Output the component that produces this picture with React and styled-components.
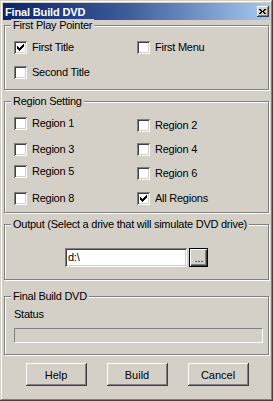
import React from "react";
import styled, { createGlobalStyle } from "styled-components";

const GlobalStyle = createGlobalStyle`
  html, body {
    margin: 0;
    padding: 0;
    background: #d4d0c8;
  }
  body {
    font-family: "Liberation Sans", Arial, sans-serif;
    font-size: 11px;
    letter-spacing: -0.25px;
    color: #000;
  }
`;

const Window = styled.div`
  width: 273px;
  height: 401px;
  box-sizing: border-box;
  padding: 3px;
  background: #d4d0c8;
  box-shadow: inset -1px -1px #404040, inset 1px 1px #d4d0c8,
    inset -2px -2px #808080, inset 2px 2px #fff;
  display: flex;
  flex-direction: column;
`;

const TitleBar = styled.div`
  height: 17px;
  display: flex;
  align-items: center;
  justify-content: space-between;
  padding-left: 2px;
  background: linear-gradient(90deg, #0a246a 0%, #3a5a98 45%, #a6caf0 100%);
  h1 {
    margin: 0;
    font-size: 11px;
    font-weight: bold;
    letter-spacing: -0.15px;
    color: #fff;
  }
`;

const CloseButton = styled.button`
  width: 12px;
  height: 11px;
  margin-right: 1px;
  padding: 0;
  border: none;
  background: #d4d0c8;
  box-shadow: inset -1px -1px #404040, inset 1px 1px #fff,
    inset -2px -2px #808080;
  display: flex;
  align-items: center;
  justify-content: center;
  svg {
    display: block;
    margin-left: -1px;
  }
`;

const Body = styled.div`
  display: flex;
  flex-direction: column;
  padding: 0 1px;
`;

const Group = styled.div`
  position: relative;
  box-sizing: border-box;
  height: ${(p) => p.$h}px;
  margin-top: ${(p) => p.$mt}px;
  border: 1px solid #808080;
  box-shadow: inset 1px 1px #fff, 1px 1px #fff;
`;

const Legend = styled.span`
  position: absolute;
  top: -7px;
  left: 6px;
  padding: 0 2px;
  line-height: 13px;
  background: #d4d0c8;
  white-space: nowrap;
`;

const CheckGrid = styled.div`
  display: grid;
  grid-template-columns: 123px 1fr;
  grid-template-rows: ${(p) => p.$rows};
  align-items: start;
  padding: 15px 0 0 9px;
`;

const CheckRow = styled.label`
  display: flex;
  align-items: center;
  gap: 5px;
  height: 13px;
  margin-top: ${(p) => p.$shift || 0}px;
  line-height: 13px;
  white-space: nowrap;
`;

const Box = styled.span`
  width: 13px;
  height: 13px;
  box-sizing: border-box;
  flex: none;
  background: #fff;
  box-shadow: inset 1px 1px #808080, inset -1px -1px #fff,
    inset 2px 2px #404040, inset -2px -2px #d4d0c8;
  svg {
    display: block;
    margin: 3px 0 0 3px;
  }
`;

const InputRow = styled.div`
  display: flex;
  justify-content: center;
  gap: 2px;
  padding-top: 23px;
`;

const TextField = styled.div`
  width: 122px;
  height: 19px;
  box-sizing: border-box;
  padding: 0 3px;
  background: #fff;
  line-height: 19px;
  box-shadow: inset 1px 1px #808080, inset -1px -1px #fff,
    inset 2px 2px #404040, inset -2px -2px #d4d0c8;
`;

const Browse = styled.button`
  width: 19px;
  height: 19px;
  padding: 0 0 0 1px;
  border: 1px solid #000;
  background: #d4d0c8;
  font: inherit;
  line-height: 14px;
  box-shadow: inset 1px 1px #fff, inset -1px -1px #404040,
    inset -2px -2px #808080;
`;

const StatusBlock = styled.div`
  padding: 11px 0 0 9px;
  line-height: 13px;
`;

const Progress = styled.div`
  width: 249px;
  height: 15px;
  box-sizing: border-box;
  margin-top: 7px;
  border: 1px solid;
  border-color: #808080 #fff #fff #808080;
`;

const ButtonBar = styled.div`
  display: flex;
  justify-content: center;
  gap: 20px;
  margin-top: 8px;
  padding-left: 1px;
`;

const PushButton = styled.button`
  width: 61px;
  height: 23px;
  padding: 0;
  border: none;
  background: #d4d0c8;
  font: inherit;
  color: #000;
  box-shadow: inset -1px -1px #404040, inset 1px 1px #fff,
    inset -2px -2px #808080;
`;

const Tick = () => (
  <svg width="7" height="7" viewBox="0 0 7 7" shapeRendering="crispEdges">
    <path
      fill="#000"
      d="M6 0h1v1h-1z M5 1h2v1h-2z M0 2h1v1h-1z M4 2h3v1h-3z M0 3h2v1h-2z M3 3h3v1h-3z M0 4h5v1h-5z M1 5h3v1h-3z M2 6h1v1h-1z"
    />
  </svg>
);

const CloseGlyph = () => (
  <svg width="7" height="6" viewBox="0 0 7 6" shapeRendering="crispEdges">
    <path
      fill="#000"
      d="M0 0h2v1h-2z M5 0h2v1h-2z M1 1h2v1h-2z M4 1h2v1h-2z M2 2h3v1h-3z M1 3h2v1h-2z M4 3h2v1h-2z M0 4h2v1h-2z M5 4h2v1h-2z"
    />
  </svg>
);

const Check = ({ label, checked, shift }) => (
  <CheckRow $shift={shift}>
    <Box>{checked && <Tick />}</Box>
    {label}
  </CheckRow>
);

export default function App() {
  return (
    <>
      <GlobalStyle />
      <Window>
        <TitleBar>
          <h1>Final Build DVD</h1>
          <CloseButton>
            <CloseGlyph />
          </CloseButton>
        </TitleBar>
        <Body>
          <Group $h={65} $mt={5}>
            <Legend>First Play Pointer</Legend>
            <CheckGrid $rows="25px 13px">
              <Check label="First Title" checked />
              <Check label="First Menu" />
              <Check label="Second Title" />
            </CheckGrid>
          </Group>

          <Group $h={112} $mt={11}>
            <Legend>Region Setting</Legend>
            <CheckGrid $rows="26px 22px 27px 13px">
              <Check label="Region 1" />
              <Check label="Region 2" shift={2} />
              <Check label="Region 3" />
              <Check label="Region 4" />
              <Check label="Region 5" />
              <Check label="Region 6" shift={2} />
              <Check label="Region 8" />
              <Check label="All Regions" checked />
            </CheckGrid>
          </Group>

          <Group $h={56} $mt={11}>
            <Legend>Output (Select a drive that will simulate DVD drive)</Legend>
            <InputRow>
              <TextField>d:\</TextField>
              <Browse>...</Browse>
            </InputRow>
          </Group>

          <Group $h={59} $mt={16}>
            <Legend>Final Build DVD</Legend>
            <StatusBlock>
              Status
              <Progress />
            </StatusBlock>
          </Group>

          <ButtonBar>
            <PushButton>Help</PushButton>
            <PushButton>Build</PushButton>
            <PushButton>Cancel</PushButton>
          </ButtonBar>
        </Body>
      </Window>
    </>
  );
}
